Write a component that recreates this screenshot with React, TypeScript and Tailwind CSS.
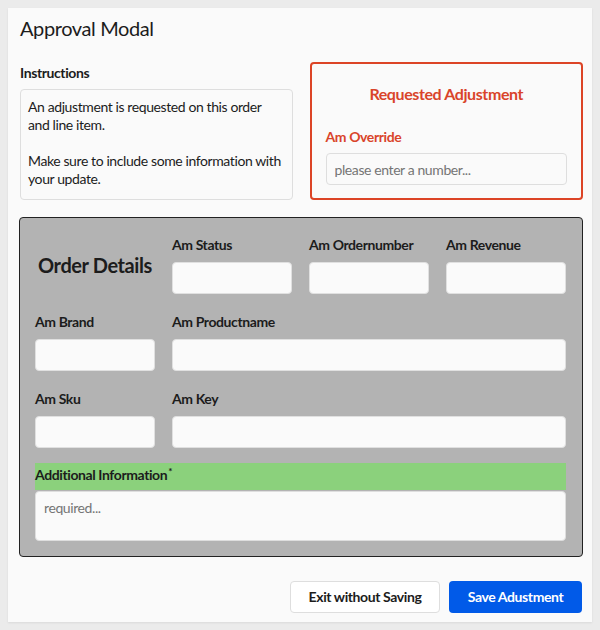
export default function App() {
  const fieldClass = 'h-8 w-full rounded-[4px] border border-[#e0e0e0] bg-[#fafafa]';
  const labelClass = 'mb-[7px] h-5 text-sm font-bold leading-5 text-[#1c1c1c]';

  return (
    <div className="h-[630px] w-[600px] bg-[#ebebeb] p-2 font-['Lato',sans-serif] tracking-[-0.025em] text-[#1c1c1c]">
      <div className="h-[614px] w-[584px] bg-[#fafafa] pb-[10px] pl-[11px] pr-[9px] pt-2 shadow-[0_1px_2px_rgba(0,0,0,0.08)]">
        <h2 className="pl-px text-xl leading-6">Approval Modal</h2>

        <div className="mt-[23px] grid grid-cols-2 gap-x-[17px]">
          <div className="pl-px">
            <div className="mb-[6px] text-sm font-bold leading-5">Instructions</div>
            <div className="h-[111px] rounded-[4px] border border-[#dedede] py-2 pl-[7px] pr-1 text-sm leading-[18px]">
              <p>
                An adjustment is requested on this order
                <br />
                and line item.
              </p>
              <p className="mt-[18px]">Make sure to include some information with your update.</p>
            </div>
          </div>
          <div className="-mt-px h-[138px] rounded-[4px] border-2 border-[#dc4426] px-[14px] pt-[18px]">
            <div className="text-center text-base font-bold leading-6 text-[#d9442a]">Requested Adjustment</div>
            <div className="mt-[21px] mb-[6px] text-sm font-bold leading-5 text-[#d9442a]">Am Override</div>
            <input
              className="h-8 w-full rounded-[4px] border border-[#dedede] bg-[#fafafa] px-2 text-sm outline-none placeholder:text-[#757575]"
              placeholder="please enter a number..."
            />
          </div>
        </div>

        <div className="mt-[17px] rounded-[4px] border border-[#222] bg-[#b3b3b3] pb-[15px] pl-[15px] pr-4 pt-[17px]">
          <div className="grid grid-cols-4 gap-x-[17px] gap-y-[18px]">
            <div className="flex items-center justify-center text-xl font-bold">Order Details</div>
            <div>
              <div className={labelClass}>Am Status</div>
              <div className={fieldClass} />
            </div>
            <div>
              <div className={labelClass}>Am Ordernumber</div>
              <div className={fieldClass} />
            </div>
            <div>
              <div className={labelClass}>Am Revenue</div>
              <div className={fieldClass} />
            </div>

            <div>
              <div className={labelClass}>Am Brand</div>
              <div className={fieldClass} />
            </div>
            <div className="col-span-3">
              <div className={labelClass}>Am Productname</div>
              <div className={fieldClass} />
            </div>

            <div>
              <div className={labelClass}>Am Sku</div>
              <div className={fieldClass} />
            </div>
            <div className="col-span-3">
              <div className={labelClass}>Am Key</div>
              <div className={fieldClass} />
            </div>
          </div>

          <div className="mt-[15px]">
            <div className="h-[27px] bg-[#8bd17c] pt-[2px] text-sm font-bold leading-5">
              Additional Information
              <span className="relative -top-[5px] ml-px text-[10px]">*</span>
            </div>
            <textarea
              className="mt-px block h-[50px] w-full resize-none rounded-[4px] border border-[#dedede] bg-[#fafafa] px-2 py-[6px] text-sm leading-5 outline-none placeholder:text-[#757575]"
              placeholder="required..."
            />
          </div>
        </div>

        <div className="mt-6 flex justify-end gap-[9px] pr-px">
          <button className="h-8 w-[150px] rounded-[4px] border border-[#dedede] bg-white text-sm font-bold text-[#1c1c1c]">
            Exit without Saving
          </button>
          <button className="h-8 w-[133px] rounded-[4px] bg-[#015ae8] text-sm font-bold text-white">
            Save Adustment
          </button>
        </div>
      </div>
    </div>
  );
}
